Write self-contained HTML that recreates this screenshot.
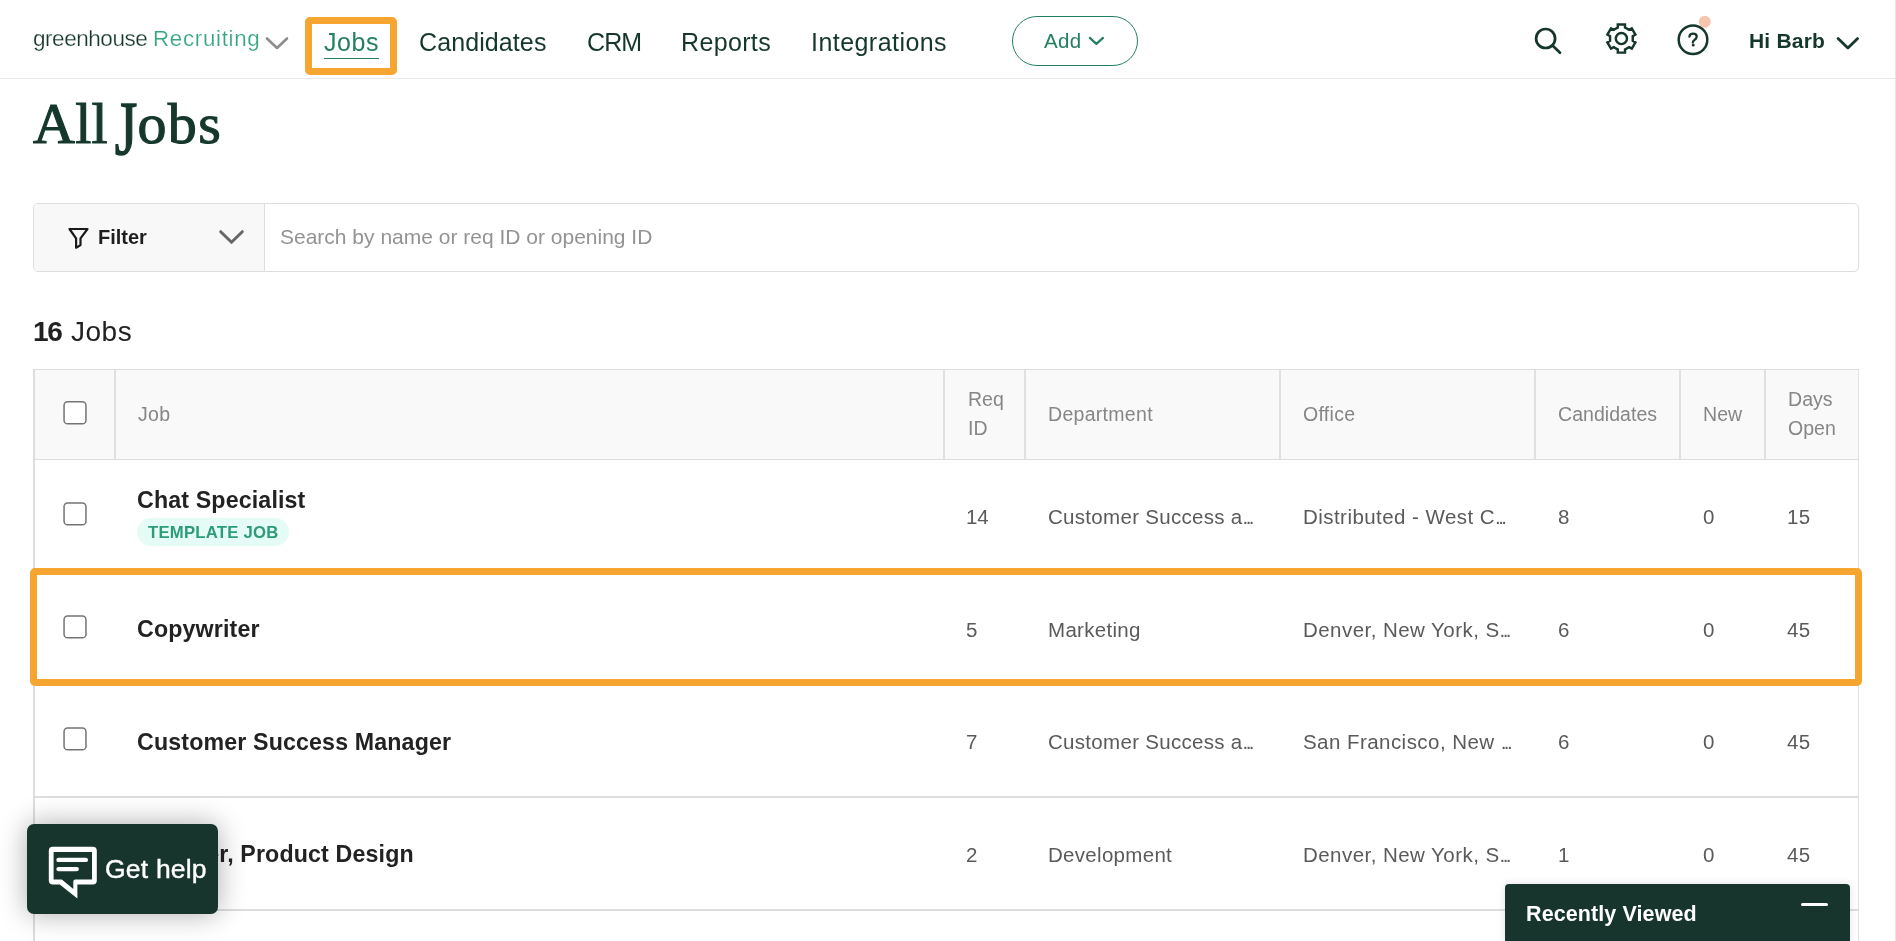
<!DOCTYPE html>
<html><head><meta charset="utf-8"><title>All Jobs</title>
<style>
html,body{margin:0;padding:0;background:#fff;}
body{width:1896px;height:941px;overflow:hidden;position:relative;font-family:'Liberation Sans', sans-serif;}
.t{position:absolute;white-space:nowrap;will-change:transform;}
.b{position:absolute;}
.el{letter-spacing:-2.6px;}
</style></head><body>
<div class="b" style="left:0px;top:78px;width:1896px;height:1px;background:#e6e9e8"></div>
<div class="b" style="left:1895px;top:0px;width:1px;height:941px;background:#e6e6e6"></div>
<div class="t" style="left:33.00px;top:24.30px;font-size:22.5px;line-height:29px;color:#15372c;font-weight:400;font-family:'Liberation Sans', sans-serif;letter-spacing:-0.45px;-webkit-text-stroke:0.25px #fff;">greenhouse</div>
<div class="t" style="left:152.50px;top:24.87px;font-size:22.3px;line-height:28px;color:#36a67f;font-weight:400;font-family:'Liberation Sans', sans-serif;letter-spacing:0.7px;-webkit-text-stroke:0.2px #fff;">Recruiting</div>
<svg class="b" style="left:262px;top:33px" width="30" height="20" viewBox="0 0 30 20"><polyline points="5,5.5 15,15 25,5.5" fill="none" stroke="#8c8c8c" stroke-width="2.6" stroke-linecap="round" stroke-linejoin="round"/></svg>
<div class="b" style="left:305px;top:17px;width:92px;height:58px;box-sizing:border-box;border:7px solid #f6a530;border-radius:5px"></div>
<div class="t" style="left:324.00px;top:25.83px;font-size:25px;line-height:32px;color:#23805f;font-weight:400;font-family:'Liberation Sans', sans-serif;letter-spacing:0.6px;">Jobs</div>
<div class="b" style="left:324px;top:57.5px;width:55px;height:1.6px;background:#23805f"></div>
<div class="t" style="left:419.00px;top:26.03px;font-size:25px;line-height:32px;color:#15372c;font-weight:400;font-family:'Liberation Sans', sans-serif;letter-spacing:0.1px;">Candidates</div>
<div class="t" style="left:586.50px;top:26.03px;font-size:25px;line-height:32px;color:#15372c;font-weight:400;font-family:'Liberation Sans', sans-serif;letter-spacing:-0.9px;">CRM</div>
<div class="t" style="left:681.00px;top:26.03px;font-size:25px;line-height:32px;color:#15372c;font-weight:400;font-family:'Liberation Sans', sans-serif;letter-spacing:0.35px;">Reports</div>
<div class="t" style="left:811.00px;top:26.03px;font-size:25px;line-height:32px;color:#15372c;font-weight:400;font-family:'Liberation Sans', sans-serif;letter-spacing:0.45px;">Integrations</div>
<div class="b" style="left:1012px;top:16px;width:126px;height:50px;box-sizing:border-box;border:1.3px solid #23805f;border-radius:25px"></div>
<div class="t" style="left:1044.00px;top:27.89px;font-size:20.5px;line-height:26px;color:#23805f;font-weight:400;font-family:'Liberation Sans', sans-serif;letter-spacing:0.3px;">Add</div>
<svg class="b" style="left:1086px;top:34px" width="22" height="14" viewBox="0 0 22 14"><polyline points="3.8,3.9 10.4,9.9 17,3.9" fill="none" stroke="#23805f" stroke-width="2.2" stroke-linecap="round" stroke-linejoin="round"/></svg>
<svg class="b" style="left:1528px;top:22px" width="40" height="40" viewBox="0 0 40 40"><circle cx="17.6" cy="16.5" r="9.5" fill="none" stroke="#15372c" stroke-width="2.7"/><line x1="24.5" y1="23.5" x2="32" y2="30.8" stroke="#15372c" stroke-width="2.7" stroke-linecap="round"/></svg>
<svg class="b" style="left:1601px;top:18px" width="42" height="42" viewBox="0 0 42 42"><polygon points="16.80,9.50 16.80,6.40 24.00,6.40 24.00,9.50 28.13,11.88 30.81,10.33 34.41,16.57 31.73,18.12 31.73,22.88 34.41,24.43 30.81,30.67 28.13,29.12 24.00,31.50 24.00,34.60 16.80,34.60 16.80,31.50 12.67,29.12 9.99,30.67 6.39,24.43 9.07,22.88 9.07,18.12 6.39,16.57 9.99,10.33 12.67,11.88" fill="none" stroke="#15372c" stroke-width="2.45" stroke-linejoin="miter"/><circle cx="20.4" cy="20.5" r="5.6" fill="none" stroke="#15372c" stroke-width="2.45"/></svg>
<svg class="b" style="left:1670px;top:10px" width="46" height="50" viewBox="0 0 46 50"><circle cx="23" cy="29.8" r="14.3" fill="none" stroke="#15372c" stroke-width="2.5"/><path d="M19.4,26.6 Q19.7,23.7 23.1,23.7 Q26.7,23.7 26.7,26.5 Q26.7,28.3 24.6,29.9 Q22.8,31.3 22.8,32.4" fill="none" stroke="#15372c" stroke-width="2.3" stroke-linecap="round"/><circle cx="23.2" cy="35.1" r="1.5" fill="#15372c"/><circle cx="34.8" cy="11.8" r="6" fill="#f5c5ae"/></svg>
<div class="t" style="left:1749.00px;top:27.02px;font-size:21px;line-height:27px;color:#15372c;font-weight:700;font-family:'Liberation Sans', sans-serif;letter-spacing:0.2px;">Hi Barb</div>
<svg class="b" style="left:1832px;top:33px" width="32" height="22" viewBox="0 0 32 22"><polyline points="6.1,5.6 15.9,14.9 25.6,5.6" fill="none" stroke="#15372c" stroke-width="2.8" stroke-linecap="round" stroke-linejoin="round"/></svg>
<div class="t" style="left:32.50px;top:86.83px;font-size:58px;line-height:73px;color:#15372c;font-weight:400;font-family:'Liberation Serif', serif;letter-spacing:0.25px;word-spacing:-8px;-webkit-text-stroke:1.1px #15372c;">All <span style="display:inline-block;transform:scaleY(1.3);transform-origin:50% 26.5%">J</span><span style="letter-spacing:1.4px">obs</span></div>
<div class="b" style="left:33px;top:203px;width:1826px;height:69px;box-sizing:border-box;border:1px solid #dedede;border-radius:5px;background:#fff"></div>
<div class="b" style="left:34px;top:204px;width:230px;height:67px;background:#f8f8f8;border-radius:4px 0 0 4px"></div>
<div class="b" style="left:264px;top:204px;width:1px;height:67px;background:#dedede"></div>
<svg class="b" style="left:62px;top:222px" width="34" height="32" viewBox="0 0 34 32"><path d="M7.5,7 H25.5 L18.5,16.3 V23.1 L14.1,25.7 V16.3 Z" fill="none" stroke="#1a1a1a" stroke-width="2.2" stroke-linejoin="round"/></svg>
<div class="t" style="left:98.00px;top:224.57px;font-size:20px;line-height:25px;color:#1f1f1f;font-weight:700;font-family:'Liberation Sans', sans-serif;">Filter</div>
<svg class="b" style="left:214px;top:224px" width="34" height="26" viewBox="0 0 34 26"><polyline points="6.7,7.7 17.5,18.3 28.3,7.7" fill="none" stroke="#666" stroke-width="3" stroke-linecap="round" stroke-linejoin="round"/></svg>
<div class="t" style="left:280.00px;top:222.52px;font-size:21px;line-height:27px;color:#939393;font-weight:400;font-family:'Liberation Sans', sans-serif;">Search by name or req ID or opening ID</div>
<div class="t" style="left:32.50px;top:313.69px;font-size:28px;line-height:35px;color:#222;font-weight:700;font-family:'Liberation Sans', sans-serif;letter-spacing:-1.3px;">16</div>
<div class="t" style="left:71.00px;top:313.69px;font-size:28px;line-height:35px;color:#222;font-weight:400;font-family:'Liberation Sans', sans-serif;letter-spacing:0.5px;">Jobs</div>
<div class="b" style="left:33px;top:369px;width:1826px;height:572px;background:#fff"></div>
<div class="b" style="left:33px;top:369px;width:1826px;height:90px;background:#f9f9f9"></div>
<div class="b" style="left:33px;top:369px;width:1826px;height:1px;background:#dddddd"></div>
<div class="b" style="left:33px;top:369px;width:2px;height:572px;background:#dddddd"></div>
<div class="b" style="left:1858px;top:369px;width:1px;height:572px;background:#e2e2e2"></div>
<div class="b" style="left:33px;top:459px;width:1826px;height:1px;background:#dddddd"></div>
<div class="b" style="left:114px;top:369px;width:2px;height:90px;background:#e0e0e0"></div>
<div class="b" style="left:943px;top:369px;width:2px;height:90px;background:#e0e0e0"></div>
<div class="b" style="left:1024px;top:369px;width:2px;height:90px;background:#e0e0e0"></div>
<div class="b" style="left:1279px;top:369px;width:2px;height:90px;background:#e0e0e0"></div>
<div class="b" style="left:1534px;top:369px;width:2px;height:90px;background:#e0e0e0"></div>
<div class="b" style="left:1679px;top:369px;width:2px;height:90px;background:#e0e0e0"></div>
<div class="b" style="left:1764px;top:369px;width:2px;height:90px;background:#e0e0e0"></div>
<div class="b" style="left:33px;top:572px;width:1826px;height:1.5px;background:#dddddd"></div>
<div class="b" style="left:33px;top:684px;width:1826px;height:1.5px;background:#dddddd"></div>
<div class="b" style="left:33px;top:796px;width:1826px;height:1.5px;background:#dddddd"></div>
<div class="b" style="left:33px;top:909px;width:1826px;height:1.5px;background:#dddddd"></div>
<svg class="b" style="left:63px;top:401px" width="26" height="26" viewBox="0 0 26 26"><rect x="1.05" y="0.85" width="21.9" height="21.9" rx="3.6" fill="#fff" stroke="#747474" stroke-width="1.5"/></svg>
<div class="t" style="left:137.50px;top:401.54px;font-size:19.5px;line-height:25px;color:#868686;font-weight:400;font-family:'Liberation Sans', sans-serif;letter-spacing:0.3px;">Job</div>
<div class="t" style="left:967.50px;top:386.74px;font-size:19.5px;line-height:25px;color:#868686;font-weight:400;font-family:'Liberation Sans', sans-serif;">Req</div>
<div class="t" style="left:967.50px;top:416.04px;font-size:19.5px;line-height:25px;color:#868686;font-weight:400;font-family:'Liberation Sans', sans-serif;">ID</div>
<div class="t" style="left:1048.00px;top:401.54px;font-size:19.5px;line-height:25px;color:#868686;font-weight:400;font-family:'Liberation Sans', sans-serif;letter-spacing:0.3px;">Department</div>
<div class="t" style="left:1303.00px;top:401.54px;font-size:19.5px;line-height:25px;color:#868686;font-weight:400;font-family:'Liberation Sans', sans-serif;letter-spacing:0.3px;">Office</div>
<div class="t" style="left:1557.50px;top:401.54px;font-size:19.5px;line-height:25px;color:#868686;font-weight:400;font-family:'Liberation Sans', sans-serif;letter-spacing:0.05px;">Candidates</div>
<div class="t" style="left:1703.00px;top:401.54px;font-size:19.5px;line-height:25px;color:#868686;font-weight:400;font-family:'Liberation Sans', sans-serif;letter-spacing:0.05px;">New</div>
<div class="t" style="left:1788.00px;top:386.74px;font-size:19.5px;line-height:25px;color:#868686;font-weight:400;font-family:'Liberation Sans', sans-serif;letter-spacing:0.05px;">Days</div>
<div class="t" style="left:1788.00px;top:416.04px;font-size:19.5px;line-height:25px;color:#868686;font-weight:400;font-family:'Liberation Sans', sans-serif;letter-spacing:0.05px;">Open</div>
<svg class="b" style="left:63px;top:502px" width="26" height="26" viewBox="0 0 26 26"><rect x="1.05" y="0.90" width="21.9" height="21.9" rx="3.6" fill="#fff" stroke="#747474" stroke-width="1.5"/></svg>
<div class="t" style="left:137.00px;top:486.36px;font-size:23.2px;line-height:29px;color:#222;font-weight:700;font-family:'Liberation Sans', sans-serif;letter-spacing:0.15px;">Chat Specialist</div>
<div class="t" style="left:965.50px;top:503.99px;font-size:20.5px;line-height:26px;color:#5a5a5a;font-weight:400;font-family:'Liberation Sans', sans-serif;letter-spacing:-0.2px;">14</div>
<div class="t" style="left:1047.50px;top:503.99px;font-size:20.5px;line-height:26px;color:#5a5a5a;font-weight:400;font-family:'Liberation Sans', sans-serif;letter-spacing:0.3px;">Customer Success a<span class=el>...</span></div>
<div class="t" style="left:1302.50px;top:503.99px;font-size:20.5px;line-height:26px;color:#5a5a5a;font-weight:400;font-family:'Liberation Sans', sans-serif;letter-spacing:0.45px;">Distributed - West C<span class=el>...</span></div>
<div class="t" style="left:1558.00px;top:503.99px;font-size:20.5px;line-height:26px;color:#5a5a5a;font-weight:400;font-family:'Liberation Sans', sans-serif;">8</div>
<div class="t" style="left:1703.00px;top:503.99px;font-size:20.5px;line-height:26px;color:#5a5a5a;font-weight:400;font-family:'Liberation Sans', sans-serif;">0</div>
<div class="t" style="left:1787.00px;top:503.99px;font-size:20.5px;line-height:26px;color:#5a5a5a;font-weight:400;font-family:'Liberation Sans', sans-serif;letter-spacing:0.3px;">15</div>
<svg class="b" style="left:63px;top:615px" width="26" height="26" viewBox="0 0 26 26"><rect x="1.05" y="0.95" width="21.9" height="21.9" rx="3.6" fill="#fff" stroke="#747474" stroke-width="1.5"/></svg>
<div class="t" style="left:137.00px;top:615.36px;font-size:23.2px;line-height:29px;color:#222;font-weight:700;font-family:'Liberation Sans', sans-serif;letter-spacing:0.15px;">Copywriter</div>
<div class="t" style="left:965.50px;top:616.89px;font-size:20.5px;line-height:26px;color:#5a5a5a;font-weight:400;font-family:'Liberation Sans', sans-serif;letter-spacing:-0.2px;">5</div>
<div class="t" style="left:1047.50px;top:616.89px;font-size:20.5px;line-height:26px;color:#5a5a5a;font-weight:400;font-family:'Liberation Sans', sans-serif;letter-spacing:0.3px;">Marketing</div>
<div class="t" style="left:1302.50px;top:616.89px;font-size:20.5px;line-height:26px;color:#5a5a5a;font-weight:400;font-family:'Liberation Sans', sans-serif;letter-spacing:0.45px;">Denver, New York, S<span class=el>...</span></div>
<div class="t" style="left:1558.00px;top:616.89px;font-size:20.5px;line-height:26px;color:#5a5a5a;font-weight:400;font-family:'Liberation Sans', sans-serif;">6</div>
<div class="t" style="left:1703.00px;top:616.89px;font-size:20.5px;line-height:26px;color:#5a5a5a;font-weight:400;font-family:'Liberation Sans', sans-serif;">0</div>
<div class="t" style="left:1787.00px;top:616.89px;font-size:20.5px;line-height:26px;color:#5a5a5a;font-weight:400;font-family:'Liberation Sans', sans-serif;letter-spacing:0.3px;">45</div>
<svg class="b" style="left:63px;top:727px" width="26" height="26" viewBox="0 0 26 26"><rect x="1.05" y="0.90" width="21.9" height="21.9" rx="3.6" fill="#fff" stroke="#747474" stroke-width="1.5"/></svg>
<div class="t" style="left:137.00px;top:727.96px;font-size:23.2px;line-height:29px;color:#222;font-weight:700;font-family:'Liberation Sans', sans-serif;letter-spacing:0.15px;">Customer Success Manager</div>
<div class="t" style="left:965.50px;top:729.49px;font-size:20.5px;line-height:26px;color:#5a5a5a;font-weight:400;font-family:'Liberation Sans', sans-serif;letter-spacing:-0.2px;">7</div>
<div class="t" style="left:1047.50px;top:729.49px;font-size:20.5px;line-height:26px;color:#5a5a5a;font-weight:400;font-family:'Liberation Sans', sans-serif;letter-spacing:0.3px;">Customer Success a<span class=el>...</span></div>
<div class="t" style="left:1302.50px;top:729.49px;font-size:20.5px;line-height:26px;color:#5a5a5a;font-weight:400;font-family:'Liberation Sans', sans-serif;letter-spacing:0.45px;">San Francisco, New <span class=el>...</span></div>
<div class="t" style="left:1558.00px;top:729.49px;font-size:20.5px;line-height:26px;color:#5a5a5a;font-weight:400;font-family:'Liberation Sans', sans-serif;">6</div>
<div class="t" style="left:1703.00px;top:729.49px;font-size:20.5px;line-height:26px;color:#5a5a5a;font-weight:400;font-family:'Liberation Sans', sans-serif;">0</div>
<div class="t" style="left:1787.00px;top:729.49px;font-size:20.5px;line-height:26px;color:#5a5a5a;font-weight:400;font-family:'Liberation Sans', sans-serif;letter-spacing:0.3px;">45</div>
<svg class="b" style="left:63px;top:840px" width="26" height="26" viewBox="0 0 26 26"><rect x="1.05" y="0.75" width="21.9" height="21.9" rx="3.6" fill="#fff" stroke="#747474" stroke-width="1.5"/></svg>
<div class="t" style="left:128.00px;top:840.26px;font-size:23.2px;line-height:29px;color:#222;font-weight:700;font-family:'Liberation Sans', sans-serif;letter-spacing:0.15px;">Designer, Product Design</div>
<div class="t" style="left:965.50px;top:841.89px;font-size:20.5px;line-height:26px;color:#5a5a5a;font-weight:400;font-family:'Liberation Sans', sans-serif;letter-spacing:-0.2px;">2</div>
<div class="t" style="left:1047.50px;top:841.89px;font-size:20.5px;line-height:26px;color:#5a5a5a;font-weight:400;font-family:'Liberation Sans', sans-serif;letter-spacing:0.3px;">Development</div>
<div class="t" style="left:1302.50px;top:841.89px;font-size:20.5px;line-height:26px;color:#5a5a5a;font-weight:400;font-family:'Liberation Sans', sans-serif;letter-spacing:0.45px;">Denver, New York, S<span class=el>...</span></div>
<div class="t" style="left:1558.00px;top:841.89px;font-size:20.5px;line-height:26px;color:#5a5a5a;font-weight:400;font-family:'Liberation Sans', sans-serif;">1</div>
<div class="t" style="left:1703.00px;top:841.89px;font-size:20.5px;line-height:26px;color:#5a5a5a;font-weight:400;font-family:'Liberation Sans', sans-serif;">0</div>
<div class="t" style="left:1787.00px;top:841.89px;font-size:20.5px;line-height:26px;color:#5a5a5a;font-weight:400;font-family:'Liberation Sans', sans-serif;letter-spacing:0.3px;">45</div>
<div class="b" style="left:137px;top:518px;width:152px;height:28px;background:#e5fcf6;border-radius:14px"></div>
<div class="t" style="left:147.50px;top:522.11px;font-size:16.7px;line-height:21px;color:#2c9c76;font-weight:700;font-family:'Liberation Sans', sans-serif;letter-spacing:0.25px;">TEMPLATE JOB</div>
<div class="b" style="left:30px;top:568px;width:1832px;height:118px;box-sizing:border-box;border:7px solid #f6a530;border-radius:5px"></div>
<div class="b" style="left:27px;top:824px;width:191px;height:90px;background:#17352c;border-radius:7px;box-shadow:0 0 28px rgba(0,0,0,0.33)"></div>
<svg class="b" style="left:40px;top:838px" width="64" height="64" viewBox="0 0 64 64"><path fill-rule="evenodd" fill="#fff" d="M12.8,8.8 H52.8 Q56.8,8.8 56.8,12.8 V42.6 Q56.8,46.6 52.8,46.6 H37.4 V60.5 L19.7,46.6 H12.8 Q8.8,46.6 8.8,42.6 V12.8 Q8.8,8.8 12.8,8.8 Z M13.6,13.9 V41.5 H21.8 L33.3,51 V43.5 Q33.3,41.5 35.3,41.5 H52 V13.9 Z"/><line x1="18.5" y1="21.9" x2="45.8" y2="21.9" stroke="#fff" stroke-width="4.4" stroke-linecap="round"/><line x1="18.5" y1="31.1" x2="36.7" y2="31.1" stroke="#fff" stroke-width="4.4" stroke-linecap="round"/></svg>
<div class="t" style="left:105.00px;top:851.71px;font-size:26.5px;line-height:34px;color:#fff;font-weight:400;font-family:'Liberation Sans', sans-serif;letter-spacing:0.2px;-webkit-text-stroke:0.4px #fff;">Get help</div>
<div class="b" style="left:1505px;top:884px;width:345px;height:57px;background:#17352c;border-radius:4px 4px 0 0;box-shadow:0 0 8px rgba(0,0,0,0.12)"></div>
<div class="t" style="left:1525.50px;top:901.35px;font-size:21.5px;line-height:27px;color:#fff;font-weight:700;font-family:'Liberation Sans', sans-serif;letter-spacing:0.1px;">Recently Viewed</div>
<div class="b" style="left:1800.5px;top:902.6px;width:27.5px;height:3px;background:#fff;border-radius:1.5px"></div>
</body></html>
